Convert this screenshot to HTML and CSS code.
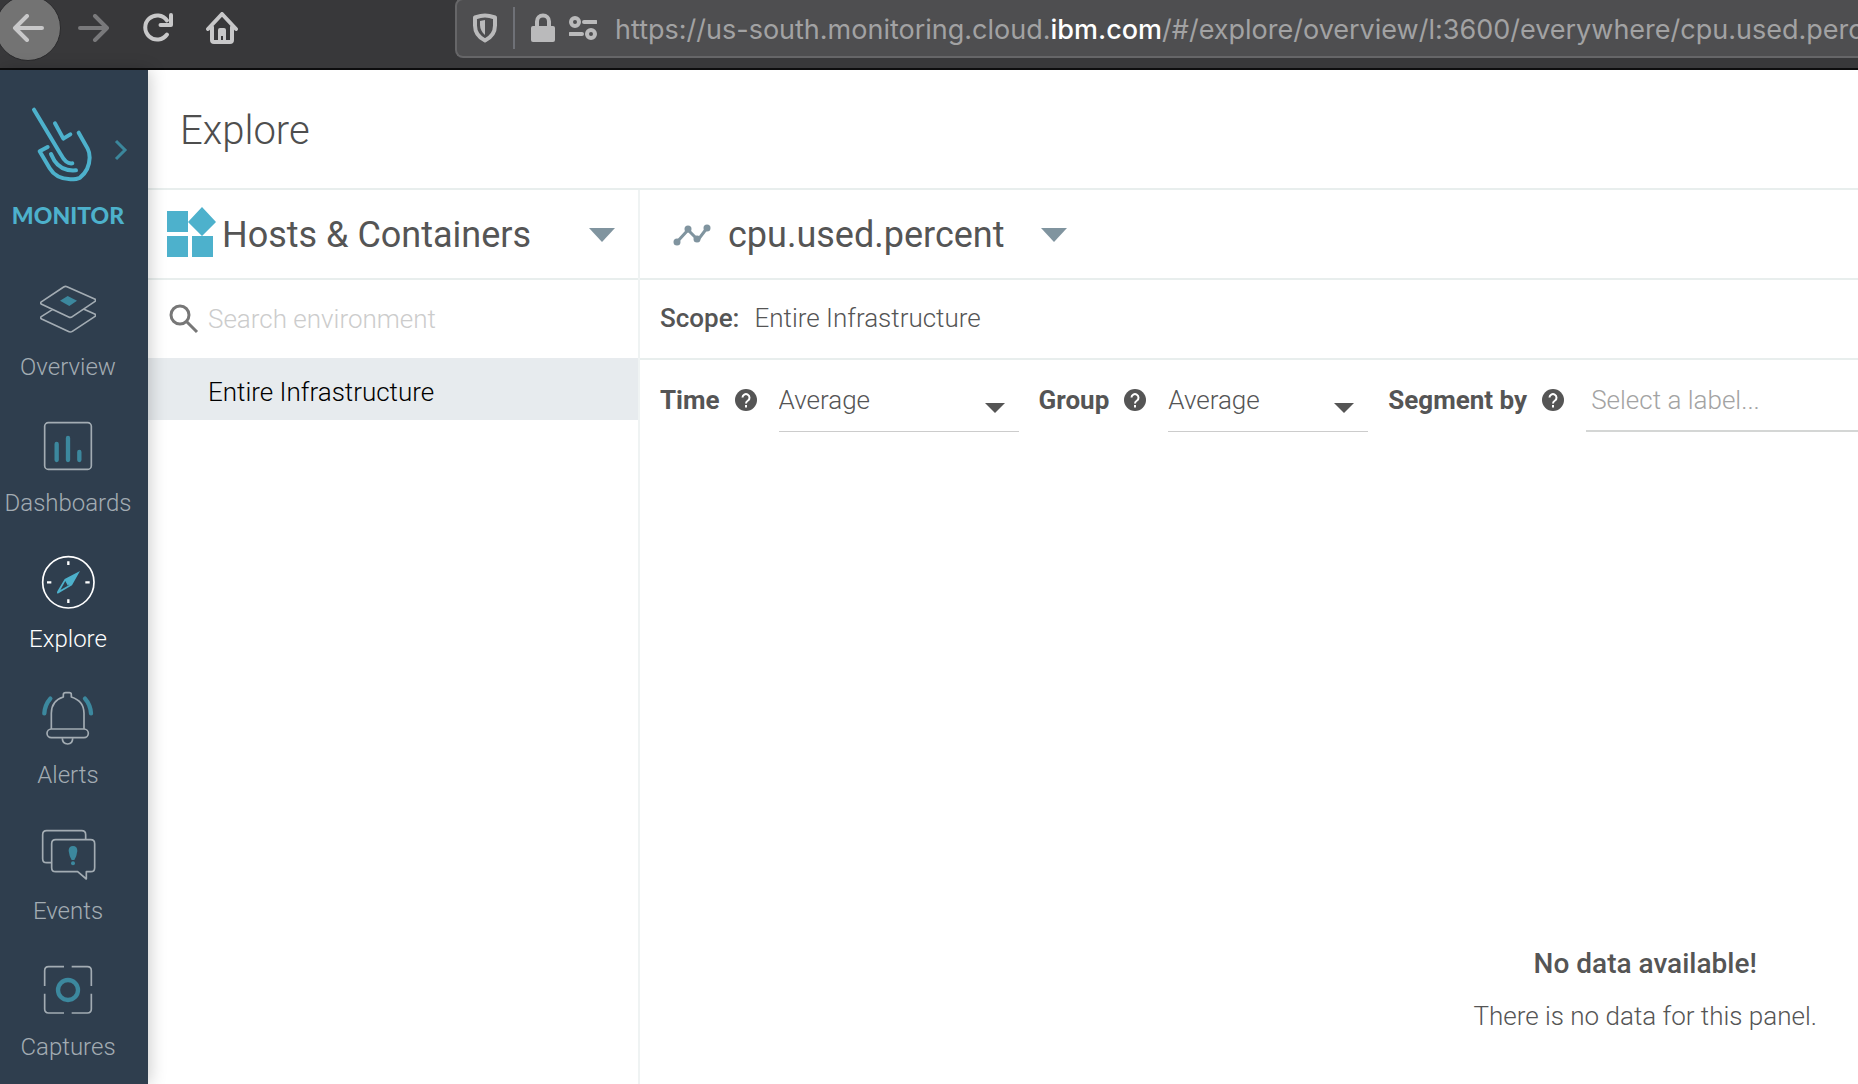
FILE: index.html
```html
<!DOCTYPE html>
<html lang="en">
<head>
<meta charset="utf-8">
<meta name="viewport" content="width=device-width, initial-scale=1">
<title>Explore</title>
<link rel="stylesheet" href="styles.css">
</head>
<body>
<header class="browser">
  <div class="browser-nav">
    <button class="nav-button nav-back" aria-label="Back"><svg width="32" height="28" viewBox="0 0 32 28"><path d="M30 14H3M15 2L3 14l12 12"/></svg></button>
    <button class="nav-button nav-forward" aria-label="Forward"><svg width="32" height="28" viewBox="0 0 32 28"><path d="M2 14h27M17 2l12 12-12 12"/></svg></button>
    <button class="nav-button" aria-label="Reload"><svg width="32" height="32" viewBox="0 0 32 32"><path d="M25 22.500A12 12 0 1 1 25 8.500M29 3v10H18.500"/></svg></button>
    <button class="nav-button" aria-label="Home"><svg width="32" height="32" viewBox="0 0 32 32"><path d="M2 17L16 2l14 15M6 15v13q0 2 2 2h16q2 0 2-2V15"/><path class="fill" d="M12 30V18q0-2 2-2h4q2 0 2 2v12h-3v-6h-2v6z"/></svg></button>
  </div>
  <div class="address">
    <svg class="shield" width="24" height="30" viewBox="0 0 24 30"><path d="M12 2.500C8 2.500 5 3.500 2 4.500v8c0 7 4 12 10 15 6-3 10-8 10-15v-8c-3-1-6-2-10-2z"/><path class="fill" d="M12 7v15c-3-2.500-5-6-5-10V8z"/></svg>
    <span class="address-divider"></span>
    <svg class="lock" width="24" height="30" viewBox="0 0 24 30"><path d="M6 14V8.500a6 6 0 0 1 12 0V14"/><rect class="fill" y="13" width="24" height="16" rx="2"/></svg>
    <svg class="permissions" width="28" height="26" viewBox="0 0 28 26"><circle cx="6" cy="7" r="4"/><path d="M15 7h12M1 19h12"/><circle cx="22" cy="19" r="4"/></svg>
    <span class="url">https://us-south.monitoring.cloud.<b>ibm.com</b>/#/explore/overview/l:3600/everywhere/cpu.used.percent</span>
  </div>
</header>

<div class="app">
  <nav class="sidebar" aria-label="Main">
    <div class="brand">
      <button class="brand-button" aria-label="Expand menu">
        <svg class="logo" width="65" height="80" viewBox="90 105 195 240"><path d="M102 119L183 254Q198 283 217 280M165 160L190 206 211 193M143 231L119 244 149 295Q168 327 211 328 231 328 240 323 268 301 269 263 269 247 263 236L236 188M153 252L163 272Q185 305 228 301"/></svg>
        <svg class="chevron" width="14" height="24" viewBox="0 0 14 24"><path d="M2 3l9 9-9 9"/></svg>
      </button>
      <span class="brand-name">MONITOR</span>
    </div>
    <a class="side-item" href="#overview">
      <svg width="56" height="56" viewBox="120 636 168 168"><path d="M191 651Q196 648 201 650L284 687Q290 691 284 695L217 740Q212 744 206 741L125 703Q119 699 125 695zM157 719L125 739Q119 743 125 747L204 784Q211 788 217 784L284 740Q290 736 284 732L252 718"/><path class="accent" d="M180 692L203 678 231 692 208 708z"/></svg>
      <span>Overview</span>
    </a>
    <a class="side-item" href="#dashboards">
      <svg width="56" height="56" viewBox="120 84 168 168"><rect x="134" y="98" width="140" height="140" rx="11"/><path class="accent-line" d="M170 162v48M204 144v66M238 186v24"/></svg>
      <span>Dashboards</span>
    </a>
    <a class="side-item active" href="#explore" aria-current="page">
      <svg width="56" height="56" viewBox="120 492 168 168"><circle cx="205" cy="577" r="77"/><path class="tick" d="M205 514v11M205 628v11M141 577h13M256 577h13"/><path class="accent" fill-rule="evenodd" d="M240 543L216 586 173 611Q169 609 172 604L194 567zM196 573L181 600 208 585z"/><path class="accent" d="M196 573L210 577 204 588z"/></svg>
      <span>Explore</span>
    </a>
    <a class="side-item" href="#alerts">
      <svg width="56" height="56" viewBox="120 60 168 168"><path d="M154 177V130Q154 92 190 81V74Q190 68 197 68H208Q214 68 214 74V81Q252 93 252 130V177M187 205Q187 222 203 222 218 222 218 205"/><rect x="141" y="177" width="124" height="26" rx="13"/><path class="accent-line" d="M151 86Q135 104 133 130M255 86Q271 104 273 130"/></svg>
      <span>Alerts</span>
    </a>
    <a class="side-item" href="#events">
      <svg width="56" height="56" viewBox="120 468 168 168"><path d="M154 578H140Q128 578 128 566V494Q128 482 140 482H245Q257 482 257 494V509M167 509H272Q284 509 284 521V593Q284 605 272 605H259V627L233 605H167Q155 605 155 593V521Q155 509 167 509z"/><path class="accent" d="M219 528Q232 528 232 543 230 560 223 570H215Q208 560 206 543 206 528 219 528z"/><circle class="accent" cx="219" cy="580" r="6"/></svg>
      <span>Events</span>
    </a>
    <a class="side-item" href="#captures">
      <svg width="56" height="56" viewBox="120 876 168 168"><path d="M134 948V902Q134 890 146 890H192M215 890H262Q274 890 274 902V948M274 971V1017Q274 1029 262 1029H215M192 1029H146Q134 1029 134 1017V971"/><circle class="accent-line" cx="204" cy="960" r="30"/></svg>
      <span>Captures</span>
    </a>
  </nav>

  <main class="main">
    <h1 class="title">Explore</h1>
    <div class="columns">
      <section class="tree" aria-label="Environment">
        <button class="heading tree-heading">
          <svg width="50" height="54" viewBox="0 0 50 54"><path fill="#4db1cc" d="M0 3h21v21H0zM0 28h21v21H0zM25 28h21v21H25zM35 -1l14 15-14 14-14-14z"/></svg>
          <span>Hosts &amp; Containers</span>
          <svg class="caret" width="26" height="14" viewBox="0 0 26 14"><path d="M0 0h26L13 14z"/></svg>
        </button>
        <label class="search">
          <svg width="30" height="30" viewBox="0 0 30 30"><circle cx="11" cy="11" r="9"/><path d="M18 18l10 10"/></svg>
          <input type="text" placeholder="Search environment" aria-label="Search environment">
        </label>
        <a class="tree-row" href="#entire" aria-current="true">Entire Infrastructure</a>
      </section>

      <section class="metric" aria-label="Metric">
        <button class="heading metric-heading">
          <svg width="38" height="22" viewBox="0 0 38 22"><path d="M4 18L15 6l10 10L34 4" fill="none" stroke="#80949f" stroke-width="3"/><g fill="#80949f"><circle cx="4" cy="18" r="3.500"/><circle cx="15" cy="5" r="3.500"/><circle cx="24" cy="15" r="3.500"/><circle cx="34" cy="4" r="3.500"/></g></svg>
          <span>cpu.used.percent</span>
          <svg class="caret" width="26" height="14" viewBox="0 0 26 14"><path d="M0 0h26L13 14z"/></svg>
        </button>
        <p class="scope"><b>Scope:</b><span>Entire Infrastructure</span></p>
        <form class="filters">
          <div class="filter">
            <label for="time">Time</label>
            <svg class="help" width="22" height="22" viewBox="0 0 22 22"><circle cx="11" cy="11" r="11"/><path d="M7.500 8.500a3.500 3.500 0 1 1 5.500 3q-2 1.200-2 3M11 16v2.500"/></svg>
            <span class="select select-time"><select id="time"><option>Average</option></select><svg width="20" height="10" viewBox="0 0 20 10"><path d="M0 0h20L10 10z"/></svg></span>
          </div>
          <div class="filter">
            <label for="group">Group</label>
            <svg class="help" width="22" height="22" viewBox="0 0 22 22"><circle cx="11" cy="11" r="11"/><path d="M7.500 8.500a3.500 3.500 0 1 1 5.500 3q-2 1.200-2 3M11 16v2.500"/></svg>
            <span class="select select-group"><select id="group"><option>Average</option></select><svg width="20" height="10" viewBox="0 0 20 10"><path d="M0 0h20L10 10z"/></svg></span>
          </div>
          <div class="filter filter-segment">
            <label for="segment">Segment by</label>
            <svg class="help" width="22" height="22" viewBox="0 0 22 22"><circle cx="11" cy="11" r="11"/><path d="M7.500 8.500a3.500 3.500 0 1 1 5.500 3q-2 1.200-2 3M11 16v2.500"/></svg>
            <input id="segment" type="text" placeholder="Select a label...">
          </div>
        </form>
        <div class="empty">
          <div class="empty-text">
            <h2>No data available!</h2>
            <p>There is no data for this panel.</p>
          </div>
        </div>
      </section>
    </div>
  </main>
</div>
</body>
</html>
```
FILE: styles.css
```css
* {
  box-sizing: border-box;
}

body {
  margin: 0;
  min-height: 100vh;
  display: flex;
  flex-direction: column;
  overflow-x: hidden;
  background: #fff;
  color: #555;
  font: 300 26px/32px Roboto, "Liberation Sans", sans-serif;
}

button,
input,
select {
  margin: 0;
  padding: 0;
  border: 0;
  border-radius: 0;
  background: none;
  color: inherit;
  font: inherit;
  text-align: left;
}

h1,
h2,
p {
  margin: 0;
}

svg {
  flex: none;
  display: block;
}

/* Browser toolbar */

.browser {
  display: flex;
  height: 70px;
  overflow: hidden;
  background: #38383a;
  border-bottom: 2px solid #0c0c0d;
}

.browser-nav {
  flex: none;
  display: flex;
  align-items: center;
  gap: 32px;
  width: 455px;
  height: 56px;
}

.browser svg {
  fill: none;
  stroke: #c8c8c9;
  stroke-width: 4;
  stroke-linecap: round;
  stroke-linejoin: round;
}

.browser svg .fill {
  fill: #c8c8c9;
  stroke: none;
}

.nav-back {
  width: 66px;
  height: 66px;
  margin-left: -5px;
  margin-right: -15px;
  padding-left: 16px;
  border: 1px solid #2a2a2c;
  border-radius: 50%;
  background: #737373;
}

.browser .nav-forward svg {
  stroke: #79797b;
}

.address {
  flex: 1;
  min-width: 0;
  display: flex;
  align-items: center;
  height: 60px;
  margin-top: -2px;
  padding-left: 16px;
  overflow: hidden;
  background: #4e4e50;
  border: 2px solid #666668;
  border-right: 0;
  border-radius: 8px 0 0 8px;
}

.browser .address svg {
  stroke: #bababb;
}

.browser .address .fill {
  fill: #bababb;
  stroke: none;
}

.address-divider {
  flex: none;
  width: 2px;
  height: 42px;
  margin: 0 16px;
  background: #6f7177;
}

.permissions {
  margin: 0 18px 0 14px;
}

.url {
  padding-top: 4px;
  color: #a2a2a3;
  font: 400 27px/34px Inter, "Liberation Sans", sans-serif;
  white-space: nowrap;
}

.url b {
  color: #fff;
  font-weight: 500;
}

/* Sidebar */

.app {
  flex: 1;
  display: flex;
}

.sidebar {
  flex: none;
  z-index: 1;
  width: 148px;
  padding: 35px 12px 0 0;
  background: #2f3e4e;
  box-shadow: 2px 0 16px rgba(0, 0, 0, 0.2);
}

.brand {
  height: 177px;
  text-align: center;
}

.brand-button {
  display: flex;
  align-items: center;
  gap: 19px;
  padding-left: 30px;
}

.logo,
.chevron {
  fill: none;
  stroke: #4db1cc;
  stroke-width: 12;
  stroke-linecap: round;
  stroke-linejoin: round;
}

.chevron {
  margin-top: 10px;
  stroke: #3b879c;
  stroke-width: 3;
  stroke-linecap: butt;
  stroke-linejoin: miter;
}

.brand-name {
  display: block;
  margin-top: 14px;
  color: #4db1cc;
  font: 900 23px/32px Lato, "Liberation Sans", sans-serif;
}

.side-item {
  display: flex;
  flex-direction: column;
  align-items: center;
  gap: 13px;
  height: 136px;
  color: #a3acb3;
  font-size: 24px;
  text-decoration: none;
}

.side-item:last-child {
  height: 101px;
}

.side-item.active {
  color: #fff;
}

.side-item svg {
  fill: none;
  stroke: currentColor;
  stroke-width: 5;
  stroke-linejoin: round;
}

.side-item .accent {
  fill: #3c889e;
  stroke: none;
}

.side-item.active .accent {
  fill: #4db1cc;
}

.side-item .accent-line {
  stroke: #3c889e;
  stroke-width: 13;
  stroke-linecap: round;
}

.side-item .tick {
  stroke-width: 7;
}

/* Page */

.main {
  flex: 1;
  min-width: 0;
  display: flex;
  flex-direction: column;
}

.title {
  height: 120px;
  padding: 37px 32px 33px;
  border-bottom: 2px solid #e8eeed;
  color: #4e4e4e;
  font-size: 40px;
  font-weight: 300;
  line-height: 48px;
}

.columns {
  flex: 1;
  display: flex;
}

.tree {
  flex: none;
  width: 492px;
  border-right: 2px solid #eff3f3;
}

.metric {
  flex: 1;
  min-width: 0;
  display: flex;
  flex-direction: column;
}

.heading {
  display: flex;
  align-items: center;
  width: 100%;
  height: 90px;
  padding-top: 2px;
  border-bottom: 2px solid #e8eeed;
  font-size: 36px;
  font-weight: 400;
}

.tree-heading {
  gap: 5px;
  padding-left: 19px;
  padding-right: 23px;
}

.tree-heading svg {
  overflow: visible;
}

.tree-heading .caret {
  margin-left: auto;
}

.metric-heading {
  gap: 17px;
  padding-left: 33px;
}

.metric-heading .caret {
  margin-left: 20px;
}

.caret {
  fill: #80949f;
}

.search {
  display: flex;
  align-items: center;
  gap: 9px;
  height: 78px;
  padding: 0 21px;
}

.search svg {
  fill: none;
  stroke: #777;
  stroke-width: 3;
}

.search input {
  flex: 1;
  min-width: 0;
}

.search input::placeholder {
  color: #ccc;
  opacity: 1;
}

.tree-row {
  display: block;
  padding: 18px 60px 12px;
  background: #e7ebee;
  color: #000;
  text-decoration: none;
}

.scope {
  display: flex;
  gap: 15px;
  height: 80px;
  padding: 22px 20px;
  border-bottom: 2px solid #e8eeed;
}

.scope b {
  font-weight: 500;
}

.filters {
  display: flex;
  gap: 20px;
  padding: 22px 0 0 20px;
}

.filter {
  flex: none;
  display: flex;
  align-items: flex-start;
}

.filter-segment {
  flex: 1;
  min-width: 0;
}

.filter label {
  flex: none;
  padding-top: 2px;
  font-weight: 700;
}

.help {
  margin: 7px 22px 0 15px;
  fill: #555;
}

.help path {
  fill: none;
  stroke: #fff;
  stroke-width: 2;
}

.select {
  display: grid;
  border-bottom: 1px solid #ccc;
}

.select-time {
  width: 240px;
}

.select-group {
  width: 200px;
}

.select select,
.select svg {
  grid-area: 1 / 1;
}

.select select {
  height: 49px;
  padding-bottom: 13px;
  appearance: none;
}

.select svg {
  margin: 21px 14px 0 0;
  justify-self: end;
  fill: #555;
  pointer-events: none;
}

.filter input {
  flex: 1;
  min-width: 0;
  height: 50px;
  padding: 0 0 12px 5px;
  border-bottom: 2px solid #d4d6d5;
}

.filter input::placeholder {
  color: #a3a3a3;
  opacity: 1;
}

.empty {
  flex: 1;
  display: flex;
  align-items: flex-end;
  justify-content: flex-end;
  padding: 0 41px 52px 0;
}

.empty-text {
  display: grid;
  gap: 20px;
  text-align: center;
}

.empty h2 {
  font-size: 28px;
  font-weight: 500;
  line-height: 32px;
}
```
